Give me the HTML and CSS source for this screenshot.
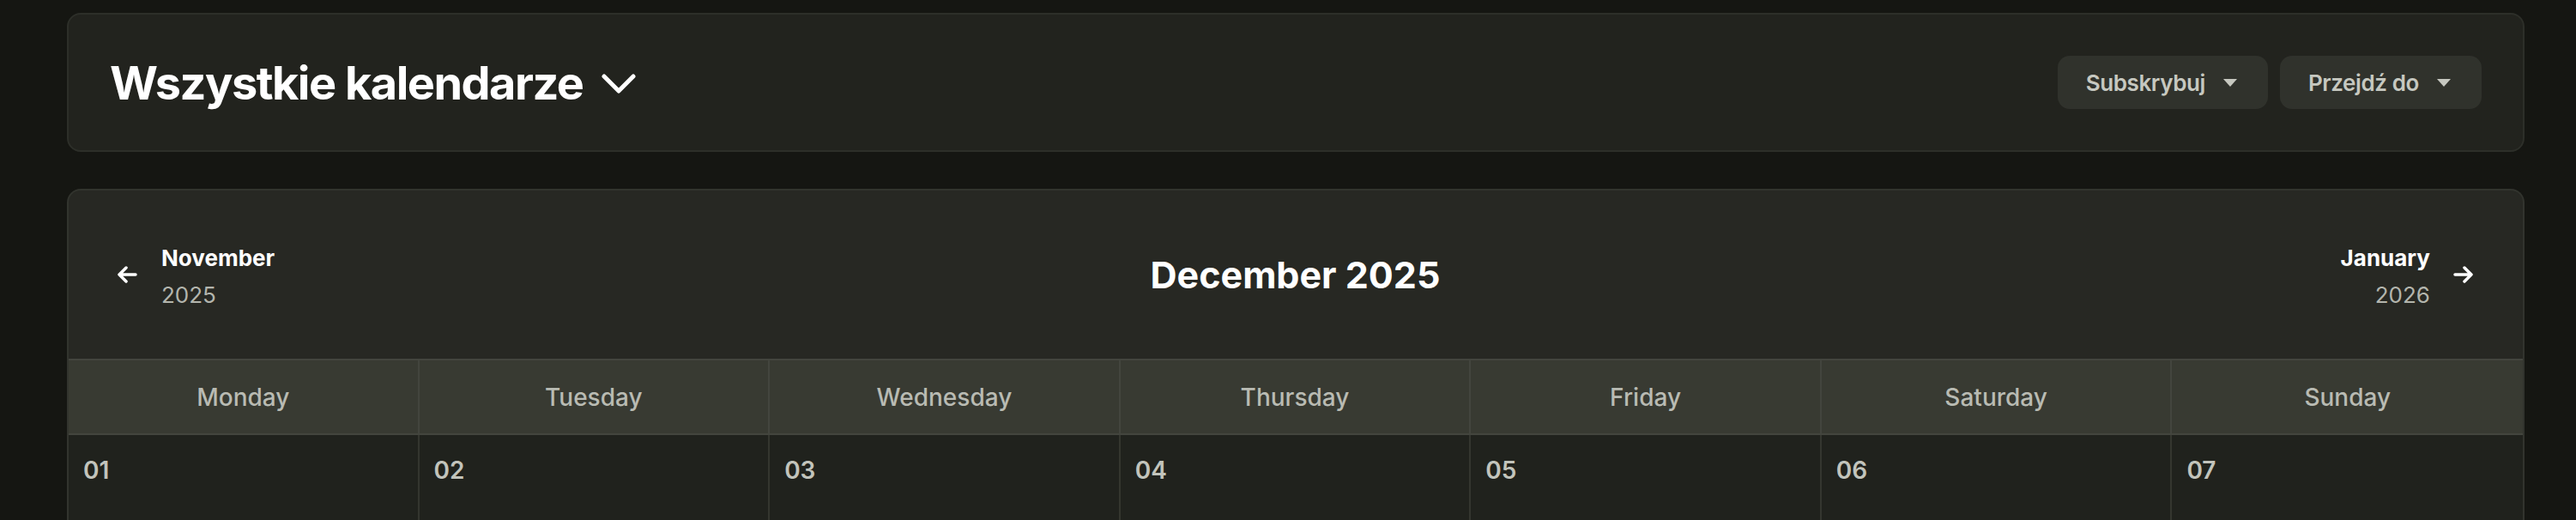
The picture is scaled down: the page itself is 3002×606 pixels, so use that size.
FILE: index.html
```html
<!DOCTYPE html>
<html lang="pl">
<head>
    <meta charset="UTF-8">
    <meta name="viewport" content="width=device-width, initial-scale=1.0">
    <title>Wszystkie kalendarze</title>
    <link rel="stylesheet" href="styles.css">
</head>
<body>
    <div class="page">
        <header class="top-bar">
            <h1 class="cal-title">
                Wszystkie kalendarze
                <svg class="chevron" width="40" height="23" viewBox="0 0 40 23">
                    <path d="M3 3 L20 20 L37 3" fill="none" stroke="#fff" stroke-width="5" stroke-linecap="round" stroke-linejoin="round"/>
                </svg>
            </h1>
            <div class="actions">
                <button class="drop-btn">Subskrybuj <span class="caret"></span></button>
                <button class="drop-btn">Przejdź do <span class="caret"></span></button>
            </div>
        </header>

        <section class="calendar">
            <div class="month-nav">
                <a class="nav-link prev" href="#">
                    <svg width="24" height="20" viewBox="0 0 24 20">
                        <path d="M22 10 H3 M11 2 L3 10 L11 18" fill="none" stroke="#fff" stroke-width="3.5" stroke-linecap="round" stroke-linejoin="round"/>
                    </svg>
                    <span class="nav-text">
                        <span class="nav-month">November</span>
                        <span class="nav-year">2025</span>
                    </span>
                </a>
                <h2 class="current-month">December 2025</h2>
                <a class="nav-link next" href="#">
                    <span class="nav-text">
                        <span class="nav-month">January</span>
                        <span class="nav-year">2026</span>
                    </span>
                    <svg width="24" height="20" viewBox="0 0 24 20">
                        <path d="M2 10 H21 M13 2 L21 10 L13 18" fill="none" stroke="#fff" stroke-width="3.5" stroke-linecap="round" stroke-linejoin="round"/>
                    </svg>
                </a>
            </div>

            <div class="week-head">
                <div class="wd">Monday</div>
                <div class="wd">Tuesday</div>
                <div class="wd">Wednesday</div>
                <div class="wd">Thursday</div>
                <div class="wd">Friday</div>
                <div class="wd">Saturday</div>
                <div class="wd">Sunday</div>
            </div>

            <div class="week">
                <div class="day"><span class="day-num">01</span></div>
                <div class="day"><span class="day-num">02</span></div>
                <div class="day"><span class="day-num">03</span></div>
                <div class="day"><span class="day-num">04</span></div>
                <div class="day"><span class="day-num">05</span></div>
                <div class="day"><span class="day-num">06</span></div>
                <div class="day"><span class="day-num">07</span></div>
            </div>
        </section>
    </div>
</body>
</html>
```

FILE: styles.css
```css
body {
    margin: 0;
    background-color: #151612;
    color: #fff;
    font-family: Inter, "Noto Sans", sans-serif;
}

.page {
    padding: 15px 60px 0 78px;
}

.top-bar {
    display: flex;
    align-items: center;
    justify-content: space-between;
    height: 162px;
    box-sizing: border-box;
    padding: 0 48px 0 48px;
    margin-bottom: 43px;
    background-color: #22231e;
    border: 2px solid #2d2f29;
    border-radius: 16px;
}

.cal-title {
    display: flex;
    align-items: center;
    gap: 22px;
    margin: 0;
    font-size: 54px;
    font-weight: 700;
    letter-spacing: -1.5px;
}

.chevron {
    margin-top: 2px;
}

.actions {
    display: flex;
    gap: 14px;
}

.drop-btn {
    display: flex;
    align-items: center;
    gap: 21px;
    height: 62px;
    padding: 0 36px 0 33px;
    border: none;
    border-radius: 14px;
    background-color: #30322c;
    color: #c6c8c0;
    font-family: Inter, "Noto Sans", sans-serif;
    font-size: 26px;
    font-weight: 600;
    letter-spacing: -0.4px;
    cursor: pointer;
}

.caret {
    width: 0;
    height: 0;
    border-left: 8px solid transparent;
    border-right: 8px solid transparent;
    border-top: 9px solid #c6c8c0;
}

.calendar {
    background-color: #272823;
    border: 2px solid #32342e;
    border-bottom: none;
    border-radius: 16px 16px 0 0;
    overflow: hidden;
}

.month-nav {
    display: grid;
    grid-template-columns: 1fr auto 1fr;
    align-items: center;
    height: 196px;
    padding: 0 57px 0 56px;
}

.nav-link {
    display: flex;
    align-items: center;
    gap: 28px;
    color: #fff;
    text-decoration: none;
}

.nav-link.next {
    justify-self: end;
    gap: 27px;
}

.nav-text {
    display: flex;
    flex-direction: column;
    padding-top: 3px;
    font-size: 26px;
    line-height: 43px;
}

.next .nav-text {
    align-items: flex-end;
}

.nav-month {
    font-weight: 700;
}

.nav-year {
    color: #b3b5ad;
}

.current-month {
    margin: 0;
    font-size: 43px;
    font-weight: 700;
}

.week-head {
    display: grid;
    grid-template-columns: repeat(7, 1fr);
    background-color: #383a32;
    border-top: 2px solid #43453e;
    border-bottom: 2px solid #43453e;
}

.wd {
    height: 85px;
    line-height: 87px;
    text-align: center;
    font-size: 28px;
    font-weight: 500;
    color: #b9bbb3;
    border-right: 2px solid #43453e;
}

.wd:last-child,
.day:last-child {
    border-right: none;
}

.week {
    display: grid;
    grid-template-columns: repeat(7, 1fr);
    background-color: #20221d;
}

.day {
    height: 200px;
    padding: 22px 17px;
    border-right: 2px solid #34362f;
}

.day-num {
    font-size: 28px;
    font-weight: 600;
    line-height: 1.4;
    color: #c2c4bc;
}
```
